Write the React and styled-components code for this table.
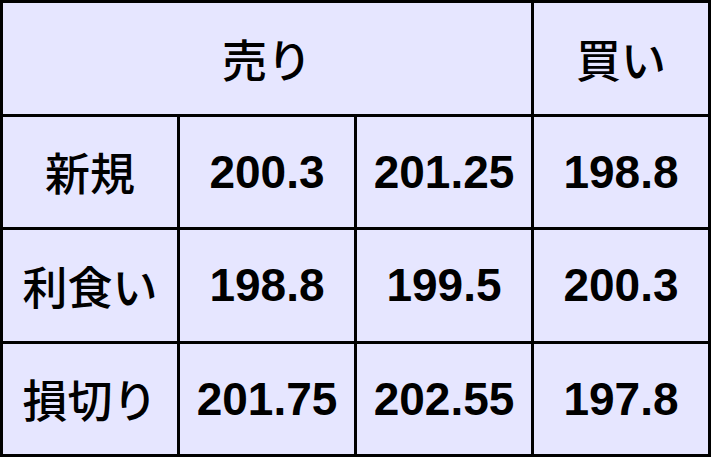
import React from "react";
import styled, { createGlobalStyle } from "styled-components";

const Global = createGlobalStyle`
  html, body { margin: 0; padding: 0; background: #ffffff; }
  body { font-family: "Liberation Sans", Arial, sans-serif; }
`;

const Grid = styled.div`
  width: 711px;
  height: 457px;
  box-sizing: border-box;
  display: grid;
  grid-template-columns: repeat(4, 1fr);
  grid-template-rows: repeat(4, 1fr);
  gap: 3px;
  padding: 3px;
  background: #000000;
`;

const Cell = styled.div`
  grid-column: span ${(p) => p.$span || 1};
  background: #e6e6ff;
  display: flex;
  align-items: center;
  justify-content: center;
  color: #000000;
  font-size: ${(p) => (p.$jp ? "45px" : "46px")};
  font-weight: ${(p) => (p.$jp ? 500 : 700)};
  font-family: ${(p) =>
    p.$jp
      ? '"Noto Sans CJK JP", "Noto Sans", sans-serif'
      : '"Liberation Sans", Arial, sans-serif'};
  white-space: nowrap;
`;

const rows = [
  ["新規", "200.3", "201.25", "198.8"],
  ["利食い", "198.8", "199.5", "200.3"],
  ["損切り", "201.75", "202.55", "197.8"],
];

export default function App() {
  return (
    <>
      <Global />
      <Grid>
        <Cell $span={3} $jp>売り</Cell>
        <Cell $jp>買い</Cell>
        {rows.map((r) =>
          r.map((v, i) => (
            <Cell key={r[0] + i} $jp={i === 0}>
              {v}
            </Cell>
          ))
        )}
      </Grid>
    </>
  );
}
